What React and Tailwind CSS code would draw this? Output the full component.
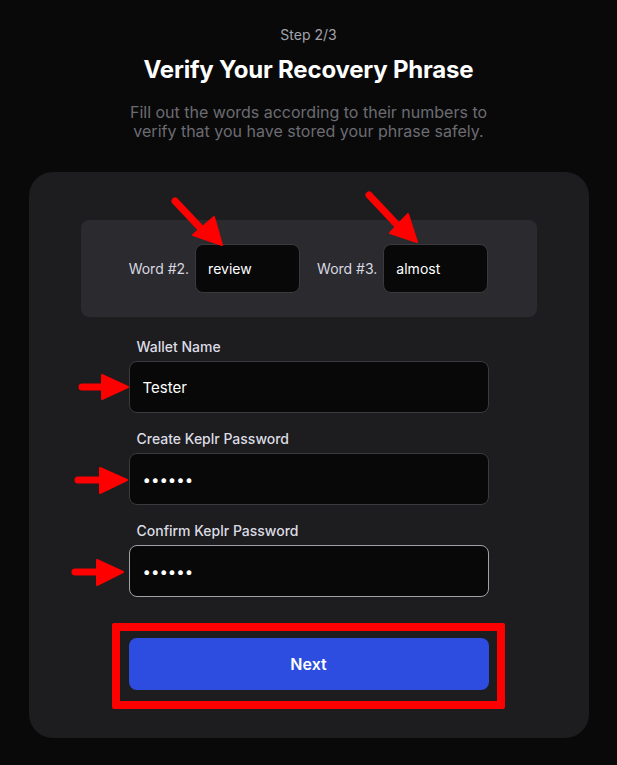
import { useState } from 'react';

const Field = ({ label, type = 'text', value, focused }) => (
  <div className="flex flex-col">
    <label className="text-sm font-medium text-[#dcdce4] px-2 mb-[4px] leading-5">{label}</label>
    <input
      type={type}
      readOnly
      value={value}
      className={`h-[52px] w-full rounded-lg bg-[#080808] px-[13px] text-[15px] text-white outline-none border ${
        focused ? 'border-[#a0a0a6]' : 'border-[#3a3a3e]'
      }`}
      style={{ fontFamily: 'Inter, sans-serif' }}
    />
  </div>
);

const WordInput = ({ label, value }) => (
  <div className="flex items-center gap-[6px]">
    <span className="text-sm text-[#d8d8e0]">{label}</span>
    <input
      readOnly
      value={value}
      className="h-[49px] w-[105px] rounded-lg bg-[#080808] border border-[#3a3a3e] px-[12px] text-sm text-white outline-none"
      style={{ fontFamily: 'Inter, sans-serif' }}
    />
  </div>
);

const Arrows = () => (
  <svg className="absolute left-0 top-0 pointer-events-none" width="617" height="765" viewBox="0 0 617 765">
    <g fill="#ff0000" stroke="#ff0000" strokeLinejoin="round">
      {/* diagonal arrows */}
      <line x1="175" y1="201" x2="208" y2="236" strokeWidth="7" strokeLinecap="round" />
      <polygon points="193,235 214,217 222,245" strokeWidth="2" />
      <line x1="369" y1="195" x2="402" y2="230" strokeWidth="7" strokeLinecap="round" />
      <polygon points="390,233 408,214 417,242" strokeWidth="2" />
      {/* horizontal arrows */}
      <line x1="82" y1="387" x2="104" y2="387" strokeWidth="7" strokeLinecap="round" />
      <polygon points="102,375 102,399 128,387" strokeWidth="2" />
      <line x1="78" y1="480" x2="102" y2="480" strokeWidth="7" strokeLinecap="round" />
      <polygon points="100,468 100,493 127,480" strokeWidth="2" />
      <line x1="75" y1="572" x2="99" y2="572" strokeWidth="7" strokeLinecap="round" />
      <polygon points="97,560 97,585 123,572" strokeWidth="2" />
    </g>
  </svg>
);

const App = () => {
  const [name] = useState('Tester');

  return (
    <div
      className="relative min-h-screen w-full bg-[#09090a] flex flex-col items-center pt-[25px]"
      style={{ fontFamily: 'Inter, "Noto Sans", sans-serif' }}
    >
      <p className="text-sm text-[#a3a3ab] leading-5">Step 2/3</p>
      <h1 className="mt-[9px] text-[24px] font-bold leading-8 text-white tracking-[-0.2px]">
        Verify Your Recovery Phrase
      </h1>
      <p className="mt-[17px] text-center text-base leading-[19px] text-[#6c6c72] w-[380px]">
        Fill out the words according to their numbers to verify that you have stored your phrase safely.
      </p>

      <div className="mt-[31px] w-[560px] rounded-[24px] bg-[#1d1d1f] px-[52px] pt-[48px] pb-[48px]">
        <div className="h-[97px] rounded-lg bg-[#2b2b2f] flex items-center justify-center gap-[17px]">
          <WordInput label="Word #2." value="review" />
          <WordInput label="Word #3." value="almost" />
        </div>

        <div className="px-[48px] mt-[20px] flex flex-col gap-[16px]">
          <Field label="Wallet Name" value={name} />
          <Field label="Create Keplr Password" type="password" value="123456" />
          <Field label="Confirm Keplr Password" type="password" value="123456" focused />
        </div>

        <div className="px-[48px] mt-[41px]">
          <div className="relative">
            <button className="h-[52px] w-full rounded-lg bg-[#2d4de0] text-base font-semibold text-white">
              Next
            </button>
            <div className="absolute -top-[15px] -left-[17px] -right-[16px] -bottom-[19px] border-[8px] border-[#ff0000] rounded-[2px] pointer-events-none" />
          </div>
        </div>
      </div>

      <Arrows />
    </div>
  );
};

export default App;
